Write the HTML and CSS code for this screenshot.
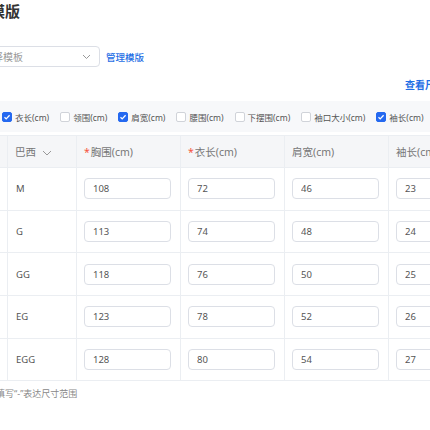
FILE: index.html
```html
<!DOCTYPE html>
<html lang="zh-CN">
<head>
  <meta charset="UTF-8">
  <title>尺码模版</title>
  <link rel="stylesheet" href="styles.css">
</head>
<body>
  <div class="page">
    <h1 class="title">尺码模版</h1>

    <div class="tpl-row">
      <div class="select">
        <span class="placeholder">请选择模板</span>
        <svg class="chev" width="9" height="6" viewBox="0 0 9 6"><path d="M1 1l3.5 3.5L8 1" fill="none" stroke="#999" stroke-width="1"/></svg>
      </div>
      <a class="link" href="#">管理模版</a>
    </div>

    <div class="toolbar">
      <a class="link" href="#">查看尺码表</a>
    </div>

    <div class="fields">
      <label class="field"><span class="box on"><svg width="8" height="8" viewBox="0 0 8 8"><path d="M1.5 4.2l1.7 1.7L6.6 2.3" fill="none" stroke="#fff" stroke-width="1.3"/></svg></span>衣长(cm)</label>
      <label class="field"><span class="box"></span>领围(cm)</label>
      <label class="field"><span class="box on"><svg width="8" height="8" viewBox="0 0 8 8"><path d="M1.5 4.2l1.7 1.7L6.6 2.3" fill="none" stroke="#fff" stroke-width="1.3"/></svg></span>肩宽(cm)</label>
      <label class="field"><span class="box"></span>腰围(cm)</label>
      <label class="field"><span class="box"></span>下摆围(cm)</label>
      <label class="field"><span class="box"></span>袖口大小(cm)</label>
      <label class="field"><span class="box on"><svg width="8" height="8" viewBox="0 0 8 8"><path d="M1.5 4.2l1.7 1.7L6.6 2.3" fill="none" stroke="#fff" stroke-width="1.3"/></svg></span>袖长(cm)</label>
    </div>

    <table class="size-table">
      <colgroup>
        <col class="c-first"><col class="c-size"><col class="c-val"><col class="c-val"><col class="c-val"><col class="c-val">
      </colgroup>
      <thead>
        <tr>
          <th></th>
          <th>巴西 <svg class="chev" width="10" height="6" viewBox="0 0 10 6"><path d="M1 1l4 4 4-4" fill="none" stroke="#999" stroke-width="1"/></svg></th>
          <th><i class="req">*</i>胸围(cm)</th>
          <th><i class="req">*</i>衣长(cm)</th>
          <th>肩宽(cm)</th>
          <th>袖长(cm)</th>
        </tr>
      </thead>
      <tbody>
        <tr><td></td><td>M</td><td><input value="108"></td><td><input value="72"></td><td><input value="46"></td><td><input value="23"></td></tr>
        <tr><td></td><td>G</td><td><input value="113"></td><td><input value="74"></td><td><input value="48"></td><td><input value="24"></td></tr>
        <tr><td></td><td>GG</td><td><input value="118"></td><td><input value="76"></td><td><input value="50"></td><td><input value="25"></td></tr>
        <tr><td></td><td>EG</td><td><input value="123"></td><td><input value="78"></td><td><input value="52"></td><td><input value="26"></td></tr>
        <tr><td></td><td>EGG</td><td><input value="128"></td><td><input value="80"></td><td><input value="54"></td><td><input value="27"></td></tr>
      </tbody>
    </table>

    <p class="note">提示：可填写“-”表达尺寸范围</p>
  </div>
</body>
</html>
```

FILE: styles.css
```css
html, body {
  margin: 0;
  overflow: hidden;
  background: #fff;
}
body {
  font-family: "Noto Sans", "Noto Sans CJK SC", sans-serif;
  color: #555;
}
.page {
  width: 540px;
  margin-left: -40px;
}
.title {
  margin: 0;
  font-size: 15px;
  line-height: 22px;
  font-weight: bold;
  color: #333;
}
.tpl-row {
  display: flex;
  align-items: center;
  gap: 6px;
  margin-top: 24px;
}
.select {
  width: 140px;
  height: 21px;
  box-sizing: border-box;
  border: 1px solid #dcdfe6;
  border-radius: 4px;
  display: flex;
  align-items: center;
  justify-content: space-between;
  padding: 0 8px 0 12px;
  font-size: 10px;
  color: #999;
}
.link {
  font-size: 9.5px;
  color: #1f6fe5;
  text-decoration: none;
  font-weight: 500;
}
.toolbar {
  margin-top: 9px;
  line-height: 14px;
  text-align: right;
  padding-right: 45px;
}
.toolbar .link {
  font-size: 10px;
  font-weight: bold;
}
.fields {
  margin-top: 9px;
  height: 31px;
  background: #f7f8fa;
  display: flex;
  align-items: center;
  gap: 11px;
  padding-left: 42px;
  font-size: 8.5px;
  color: #555;
}
.field {
  display: flex;
  align-items: center;
  gap: 3px;
  white-space: nowrap;
}
.box {
  width: 10px;
  height: 10px;
  box-sizing: border-box;
  border: 1px solid #d0d3d9;
  border-radius: 2px;
  background: #fff;
  display: flex;
  align-items: center;
  justify-content: center;
}
.box.on {
  background: #2569f0;
  border-color: #2569f0;
}
.size-table {
  margin-top: 3px;
  border-collapse: collapse;
  table-layout: fixed;
  width: 531px;
}
.c-first { width: 47px; }
.c-size { width: 69px; }
.c-val { width: 104px; }
.size-table th,
.size-table td {
  border: 1px solid #ebeef2;
  border-top: 0;
  padding: 0 7px;
  text-align: left;
}
.size-table tr:first-child th {
  border-top: 1px solid #ebeef2;
}
.size-table th {
  height: 31px;
  background: #f5f6f8;
  font-weight: normal;
  font-size: 10.5px;
  color: #777;
}
.size-table th .chev {
  margin-left: 3px;
  vertical-align: middle;
}
.req {
  font-style: normal;
  color: #f5533d;
  margin-right: 1px;
}
.size-table td {
  height: 41.7px;
  font-size: 9.5px;
  color: #555;
}
.size-table td:nth-child(2) {
  padding-left: 8px;
}
.size-table input {
  width: 87px;
  height: 21px;
  box-sizing: border-box;
  border: 1px solid #dcdfe6;
  border-radius: 4px;
  padding: 0 8px;
  font: inherit;
  color: #555;
  display: block;
}
.note {
  margin: 5px 0 0;
  line-height: 16px;
  font-size: 9px;
  color: #888;
}
```
